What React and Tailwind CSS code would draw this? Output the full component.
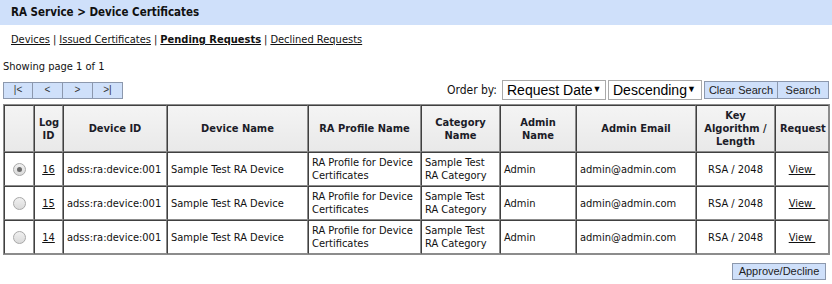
import React from "react";

const rows = [
  { id: "16", checked: true },
  { id: "15", checked: false },
  { id: "14", checked: false },
];

const th =
  "border-t border-l border-t-[#404040] border-l-[#404040] border-r border-b border-r-[#8c8c8c] border-b-[#8c8c8c] bg-gradient-to-b from-[#f4f4f4] to-[#e9e9e9] font-bold text-[#1c1c28] text-center align-middle px-1 leading-[13px]";
const td =
  "border-t border-l border-t-[#404040] border-l-[#404040] border-r border-b border-r-[#8c8c8c] border-b-[#8c8c8c] bg-white align-middle px-[3px] leading-[13px] text-[#111]";

const arial = { fontFamily: "'Liberation Sans', Arial, sans-serif" };

function Radio({ checked }) {
  return (
    <span className="inline-flex w-[13px] h-[13px] rounded-full border border-[#a8a8a8] bg-gradient-to-b from-[#f0f0f0] to-[#dadada] items-center justify-center align-middle">
      {checked && <span className="w-[5px] h-[5px] rounded-full bg-[#6a6a6a]" />}
    </span>
  );
}

export default function App() {
  return (
    <div className="w-[832px] h-[284px] bg-white text-[11px] text-[#111] overflow-hidden" style={{ fontFamily: "Tahoma, 'DejaVu Sans Condensed', 'Liberation Sans', sans-serif" }}>
      <div className="h-[25px] bg-[#cfe0fa] flex items-center pl-[11px] font-bold text-[11.5px]">
        RA Service &gt; Device Certificates
      </div>
      <div className="h-[30px] flex items-center pl-[11px] gap-[3px] pt-[1px]">
        <a className="underline">Devices</a>
        <span>|</span>
        <a className="underline">Issued Certificates</a>
        <span>|</span>
        <a className="underline font-bold">Pending Requests</a>
        <span>|</span>
        <a className="underline">Declined Requests</a>
      </div>
      <div className="pl-[3px] h-[24px] flex items-center pt-[1px]">Showing page 1 of 1</div>
      <div className="flex items-center justify-between pl-[3px] pr-[3px] h-[22px]">
        <div className="flex">
          {["|<", "<", ">", ">|"].map((t, i) => (
            <span
              key={i}
              className={`w-[30px] h-[17px] bg-[#cfe0fa] border border-[#8c98ad] ${i > 0 ? "border-l-0" : ""} flex items-center justify-center text-[10px] text-[#333] pb-[1px]`}
              style={arial}
            >
              {t}
            </span>
          ))}
        </div>
        <div className="flex items-center gap-[2px]">
          <span className="mr-[3px] text-[12px]">Order by:</span>
          <span className="w-[104px] h-[20px] border border-[#a9a9a9] flex items-center justify-between pl-[4px] pr-[6px] text-[14px] text-black whitespace-nowrap" style={arial}>
            Request Date <span className="text-[9px]">▼</span>
          </span>
          <span className="w-[94px] h-[20px] border border-[#a9a9a9] flex items-center justify-between pl-[4px] pr-[6px] text-[14px] text-black whitespace-nowrap" style={arial}>
            Descending <span className="text-[9px]">▼</span>
          </span>
          <span className="flex">
            <span className="h-[18px] w-[74px] bg-[#cfe0fa] border border-[#8c98ad] flex items-center justify-center text-[11px] text-[#222]" style={arial}>Clear Search</span>
            <span className="h-[18px] w-[51px] bg-[#cfe0fa] border border-l-0 border-[#8c98ad] flex items-center justify-center text-[11px] text-[#222]" style={arial}>Search</span>
          </span>
        </div>
      </div>
      <div className="pl-[3px] pt-[3px]">
        <table className="table-fixed border-separate border-spacing-0 border border-[#8c8c8c] w-[826px]">
          <colgroup>
            <col className="w-[30px]" />
            <col className="w-[29px]" />
            <col className="w-[104px]" />
            <col className="w-[141px]" />
            <col className="w-[113px]" />
            <col className="w-[79px]" />
            <col className="w-[76px]" />
            <col className="w-[120px]" />
            <col className="w-[79px]" />
            <col className="w-[54px]" />
          </colgroup>
          <thead>
            <tr className="h-[47px]">
              <th className={th}></th>
              <th className={th + " px-0"}>Log<br />ID</th>
              <th className={th}>Device ID</th>
              <th className={th}>Device Name</th>
              <th className={th}>RA Profile Name</th>
              <th className={th}>Category<br />Name</th>
              <th className={th}>Admin<br />Name</th>
              <th className={th}>Admin Email</th>
              <th className={th}>Key<br />Algorithm /<br />Length</th>
              <th className={th + " px-0"}>Request</th>
            </tr>
          </thead>
          <tbody>
            {rows.map((r) => (
              <tr key={r.id} className="h-[34px]">
                <td className={td + " text-center"}><Radio checked={r.checked} /></td>
                <td className={td + " text-center"}><a className="underline">{r.id}</a></td>
                <td className={td}>adss:ra:device:001</td>
                <td className={td}>Sample Test RA Device</td>
                <td className={td}>RA Profile for Device<br />Certificates</td>
                <td className={td}>Sample Test<br />RA Category</td>
                <td className={td}>Admin</td>
                <td className={td}>admin@admin.com</td>
                <td className={td + " text-center"}>RSA / 2048</td>
                <td className={td + " text-center"}><a className="underline">View&nbsp;</a></td>
              </tr>
            ))}
          </tbody>
        </table>
      </div>
      <div className="flex justify-end pr-[6px] pt-[8px]">
        <span className="h-[17px] w-[94px] bg-[#cfe0fa] border border-[#8c98ad] flex items-center justify-center text-[11px] text-[#222]" style={arial}>
          Approve/Decline
        </span>
      </div>
    </div>
  );
}
